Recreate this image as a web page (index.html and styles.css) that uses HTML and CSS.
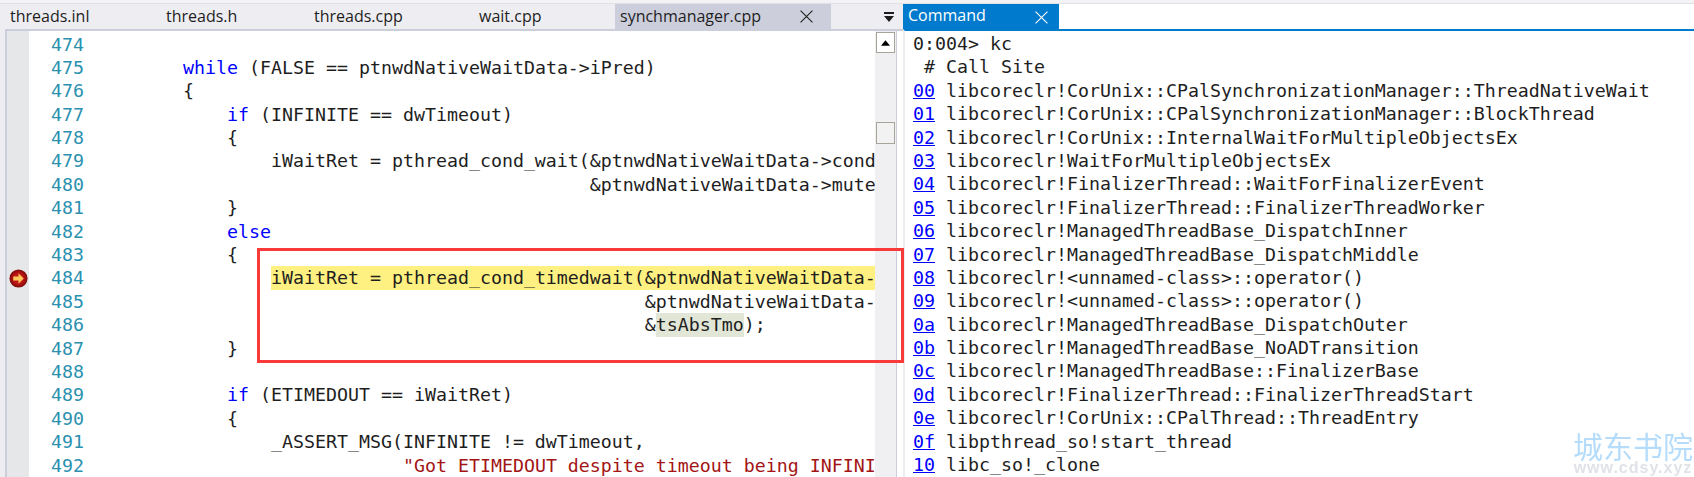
FILE: index.html
```html
<!DOCTYPE html>
<html lang="en">
<head>
<meta charset="utf-8">
<title>Debugger</title>
<link rel="stylesheet" href="styles.css">
</head>
<body>
<div class="app">
  <section class="left">
    <div class="tabs">
      <div class="tab t1">threads.inl</div>
      <div class="tab t2">threads.h</div>
      <div class="tab t3">threads.cpp</div>
      <div class="tab t4">wait.cpp</div>
      <div class="tab t5 active">synchmanager.cpp
        <svg class="close" viewBox="0 0 12 12"><path d="M0.5 0.5L11.5 11.5M11.5 0.5L0.5 11.5" stroke="#1e1e1e" fill="none"/></svg>
      </div>
      <div class="overflow">
        <svg viewBox="0 0 10 10" class="ovicon"><path d="M0 0H10V2H0Z M0 4H10L5 10Z" fill="#1e1e1e"/></svg>
      </div>
    </div>
    <div class="editor">
      <div class="gutter">
        <svg class="bp" viewBox="0 0 20 20">
          <defs><radialGradient id="g" cx="0.5" cy="0.5" r="0.5"><stop offset="0.55" stop-color="#c01616"/><stop offset="1" stop-color="#7c0a0a"/></radialGradient></defs>
          <circle cx="10" cy="10" r="9.5" fill="url(#g)"/>
          <path d="M4.5 8H10V4.5L15.5 10L10 15.5V12H4.5Z" fill="#fcc95a"/>
        </svg>
      </div>
      <div class="nums">
        <div>474</div><div>475</div><div>476</div><div>477</div><div>478</div><div>479</div><div>480</div><div>481</div><div>482</div><div>483</div><div>484</div><div>485</div><div>486</div><div>487</div><div>488</div><div>489</div><div>490</div><div>491</div><div>492</div>
      </div>
      <div class="code">
<div class="ln"> </div>
<div class="ln">        <b>while</b> (FALSE == ptnwdNativeWaitData-&gt;iPred)</div>
<div class="ln">        {</div>
<div class="ln">            <b>if</b> (INFINITE == dwTimeout)</div>
<div class="ln">            {</div>
<div class="ln">                iWaitRet = pthread_cond_wait(&amp;ptnwdNativeWaitData-&gt;cond,</div>
<div class="ln">                                             &amp;ptnwdNativeWaitData-&gt;mutex);</div>
<div class="ln">            }</div>
<div class="ln">            <b>else</b></div>
<div class="ln">            {</div>
<div class="ln">                <span class="cur">iWaitRet = pthread_cond_timedwait(&amp;ptnwdNativeWaitData-&gt;cond,</span></div>
<div class="ln">                                                  &amp;ptnwdNativeWaitData-&gt;mutex,</div>
<div class="ln">                                                  &amp;<span class="ref">tsAbsTmo</span>);</div>
<div class="ln">            }</div>
<div class="ln"> </div>
<div class="ln">            <b>if</b> (ETIMEDOUT == iWaitRet)</div>
<div class="ln">            {</div>
<div class="ln">                _ASSERT_MSG(INFINITE != dwTimeout,</div>
<div class="ln">                            <i>"Got ETIMEDOUT despite timeout being INFINITE"</i>);</div>
      </div>
      <div class="scrollbar">
        <div class="up"><svg viewBox="0 0 10 6" class="upicon"><path d="M0 6L5 0L10 6Z" fill="#000"/></svg></div>
        <div class="thumb"></div>
      </div>
    </div>
  </section>
  <section class="right">
    <div class="rtabs">
      <div class="ctab">Command
        <svg class="close cclose" viewBox="0 0 12 12"><path d="M0.5 0.5L11.5 11.5M11.5 0.5L0.5 11.5" stroke="#fff" fill="none"/></svg>
      </div>
    </div>
    <div class="cmd">
<div class="ln">0:004&gt; kc</div>
<div class="ln"> # Call Site</div>
<div class="ln"><a>00</a> libcoreclr!CorUnix::CPalSynchronizationManager::ThreadNativeWait</div>
<div class="ln"><a>01</a> libcoreclr!CorUnix::CPalSynchronizationManager::BlockThread</div>
<div class="ln"><a>02</a> libcoreclr!CorUnix::InternalWaitForMultipleObjectsEx</div>
<div class="ln"><a>03</a> libcoreclr!WaitForMultipleObjectsEx</div>
<div class="ln"><a>04</a> libcoreclr!FinalizerThread::WaitForFinalizerEvent</div>
<div class="ln"><a>05</a> libcoreclr!FinalizerThread::FinalizerThreadWorker</div>
<div class="ln"><a>06</a> libcoreclr!ManagedThreadBase_DispatchInner</div>
<div class="ln"><a>07</a> libcoreclr!ManagedThreadBase_DispatchMiddle</div>
<div class="ln"><a>08</a> libcoreclr!&lt;unnamed-class&gt;::operator()</div>
<div class="ln"><a>09</a> libcoreclr!&lt;unnamed-class&gt;::operator()</div>
<div class="ln"><a>0a</a> libcoreclr!ManagedThreadBase_DispatchOuter</div>
<div class="ln"><a>0b</a> libcoreclr!ManagedThreadBase_NoADTransition</div>
<div class="ln"><a>0c</a> libcoreclr!ManagedThreadBase::FinalizerBase</div>
<div class="ln"><a>0d</a> libcoreclr!FinalizerThread::FinalizerThreadStart</div>
<div class="ln"><a>0e</a> libcoreclr!CorUnix::CPalThread::ThreadEntry</div>
<div class="ln"><a>0f</a> libpthread_so!start_thread</div>
<div class="ln"><a>10</a> libc_so!_clone</div>
    </div>
  </section>
  <div class="redbox"></div>
  <div class="mark">
    <div class="mark-cn">城东书院</div>
    <div class="mark-en">www.cdsy.xyz</div>
  </div>
</div>
</body>
</html>
```
FILE: styles.css
```css
* { box-sizing: border-box; }
html, body { margin: 0; padding: 0; height: 100%; overflow: hidden; background: #fff; }
.app {
  position: relative;
  display: flex;
  width: 1694px;
  height: 477px;
  overflow: hidden;
  background: #f3f3f6;
  color: #1e1e1e;
}
.left {
  width: 903px;
  flex: none;
  display: flex;
  flex-direction: column;
  background: #eeeef2;
  border-top: 1px solid #e0e0e6;
  margin-top: 3px;
}
.tabs {
  display: flex;
  height: 25px;
  padding-left: 5px;
  font: 16px/24px "Open Sans", "Noto Sans", sans-serif;
  flex: none;
}
.tab { padding-left: 5px; position: relative; }
.t1 { width: 156px; }
.t2 { width: 148px; }
.t3 { width: 165px; }
.t4 { width: 141px; }
.t5 { width: 216px; }
.active { background: #cccedb; color: #1e1e1e; }
.close { width: 13px; height: 13px; position: absolute; right: 18px; top: 6px; }
.overflow { width: 72px; display: flex; justify-content: flex-end; padding: 8px 9px 0 0; }
.ovicon { width: 10px; height: 10px; }
.editor {
  flex: 1;
  display: flex;
  margin-left: 5px;
  border-top: 2px solid #cccedb;
  border-left: 2px solid #cccedb;
  background: #fff;
  min-height: 0;
  position: relative;
}
.gutter {
  width: 22px;
  flex: none;
  background: #e6e7e8;
  position: relative;
}
.bp { position: absolute; left: 2px; top: 238px; width: 19px; height: 19px; }
.nums, .code, .cmd {
  font-family: "DejaVu Sans Mono", monospace;
  font-size: 18.27px;
  line-height: 23.4px;
}
.nums {
  width: 55px;
  flex: none;
  padding: 1.5px 0 0 22px;
  color: #2b91af;
}
.nums div { height: 23.4px; }
.code {
  width: 791px;
  flex: none;
  padding: 1.5px 0 0 11px;
  overflow: hidden;
  color: #1e1e1e;
}
.ln { height: 23.4px; white-space: pre; }
.code b { font-weight: normal; color: #0000ff; }
.code i { font-style: normal; color: #a31515; }
.cur { background: #fff181; display: inline-block; height: 24px; }
.ref { background: #e2e6d6; display: inline-block; height: 24px; }
.scrollbar {
  width: 22px;
  flex: none;
  background: #f0f0f2;
  border-right: 1px solid #cccedb;
  padding-left: 1px;
}
.up {
  width: 19px;
  height: 21px;
  margin-top: 1px;
  border: 1px solid #a8a49a;
  background: #fff;
  display: flex;
  align-items: center;
  justify-content: center;
}
.upicon { width: 9px; height: 6px; }
.thumb {
  width: 19px;
  height: 22px;
  margin-top: 69px;
  border: 1px solid #a8a49a;
  background: #f2f2f2;
}
.right {
  flex: 1;
  display: flex;
  flex-direction: column;
  margin-top: 3px;
  border-top: 1px solid #e0e0e6;
  background: #fff;
}
.rtabs {
  height: 25px;
  flex: none;
}
.ctab {
  position: relative;
  width: 156px;
  height: 25px;
  background: #007acc;
  color: #fff;
  padding-left: 5px;
  font: 16px/22px "Open Sans", "Noto Sans", sans-serif;
}
.cclose { right: 11px; top: 7px; }
.cmd {
  flex: 1;
  border-top: 2px solid #007acc;
  border-left: 2px solid #eeeef2;
  padding: 1px 0 0 8px;
  overflow: hidden;
  color: #1e1e1e;
}
.cmd a { color: #0000ff; text-decoration: underline; }
.redbox {
  position: absolute;
  left: 257px;
  top: 248px;
  width: 647px;
  height: 115px;
  border: 3px solid #f83a3a;
}
.mark {
  position: absolute;
  right: 0;
  bottom: 1px;
  width: 122px;
  text-align: center;
  filter: blur(0.4px);
}
.mark-cn {
  font: 30px/29px "Noto Sans CJK SC", sans-serif;
  color: #b5dcfb;
  white-space: nowrap;
  text-shadow: 0 0 2px #fff;
}
.mark-en {
  font: bold 16px/16px "Liberation Sans", sans-serif;
  color: #dfe2e7;
  letter-spacing: 1px;
  white-space: nowrap;
}
```
